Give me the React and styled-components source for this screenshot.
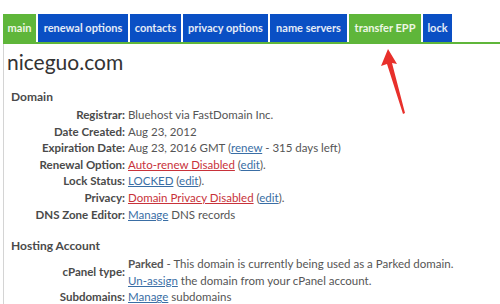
import React from 'react'
import styled, { createGlobalStyle } from 'styled-components'

const GlobalStyle = createGlobalStyle`
  body {
    margin: 0;
    background: #fff;
    font-family: Lato, "Open Sans", sans-serif;
  }
`

const Page = styled.div`
  width: 500px;
  height: 304px;
  overflow: hidden;
  position: relative;
  padding: 14px 0 0 3px;
  box-sizing: border-box;
`

const TabBar = styled.div`
  display: flex;
  gap: 2px;
  border-bottom: 2px solid #5fb63a;
`

const Tab = styled.div`
  background: ${p => (p.active ? '#5fb63a' : '#0a4fc4')};
  color: ${p => (p.active ? '#eef6e4' : '#e4ebf7')};
  font-size: 11px;
  font-weight: 700;
  height: 28px;
  line-height: 28px;
  width: ${p => p.w}px;
  text-align: center;
  white-space: nowrap;
`

const Panel = styled.div`
  border-left: 1px solid #d4d4d4;
  height: 260px;
  padding: 5px 0 0 3px;
  color: #555;
`

const Title = styled.h1`
  margin: 0;
  font-weight: 400;
  font-size: 21px;
  line-height: 26px;
  color: #333;
`

const SectionTitle = styled.h2`
  margin: ${p => p.top || 14}px 0 3px 4px;
  font-size: 12px;
  font-weight: 700;
  color: #4a4a4a;
`

const Grid = styled.div`
  display: grid;
  grid-template-columns: 118px 1fr;
  column-gap: 3px;
  font-size: 11.5px;
  line-height: 16.6px;
`

const Label = styled.div`
  text-align: right;
  font-weight: 700;
  color: #4a4a4a;
  align-self: center;
`

const Value = styled.div`
  color: #555;
  white-space: nowrap;
`

const Link = styled.span`
  color: ${p => (p.red ? '#c8323a' : '#3a6ea5')};
  text-decoration: underline;
`

const Arrow = styled.svg`
  position: absolute;
  left: 378px;
  top: 46px;
`

const tabs = [
  { name: 'main', active: true, w: 33 },
  { name: 'renewal options', w: 90 },
  { name: 'contacts', w: 51 },
  { name: 'privacy options', w: 85 },
  { name: 'name servers', w: 77 },
  { name: 'transfer EPP', active: true, w: 72 },
  { name: 'lock', w: 29 }
]

export default function App () {
  return (
    <Page>
      <GlobalStyle />
      <TabBar>
        {tabs.map(t => (
          <Tab key={t.name} active={t.active} w={t.w}>{t.name}</Tab>
        ))}
      </TabBar>
      <Panel>
        <Title>niceguo.com</Title>
        <SectionTitle top={14}>Domain</SectionTitle>
        <Grid>
          <Label>Registrar:</Label>
          <Value>Bluehost via FastDomain Inc.</Value>
          <Label>Date Created:</Label>
          <Value>Aug 23, 2012</Value>
          <Label>Expiration Date:</Label>
          <Value>Aug 23, 2016 GMT (<Link>renew</Link> - 315 days left)</Value>
          <Label>Renewal Option:</Label>
          <Value><Link red>Auto-renew Disabled</Link> (<Link>edit</Link>).</Value>
          <Label>Lock Status:</Label>
          <Value><Link>LOCKED</Link> (<Link>edit</Link>).</Value>
          <Label>Privacy:</Label>
          <Value><Link red>Domain Privacy Disabled</Link> (<Link>edit</Link>).</Value>
          <Label>DNS Zone Editor:</Label>
          <Value><Link>Manage</Link> DNS records</Value>
        </Grid>
        <SectionTitle top={15}>Hosting Account</SectionTitle>
        <Grid>
          <Label>cPanel type:</Label>
          <Value>
            <b>Parked</b> - This domain is currently being used as a Parked domain.<br />
            <Link>Un-assign</Link> the domain from your cPanel account.
          </Value>
          <Label>Subdomains:</Label>
          <Value><Link>Manage</Link> subdomains</Value>
        </Grid>
      </Panel>
      <Arrow width='36' height='72' viewBox='0 0 36 72'>
        <path d='M10 3 L3 20 L9 18 L25 68 L27 67 L14 17 L19 18 Z' fill='#e8302b' />
      </Arrow>
    </Page>
  )
}
